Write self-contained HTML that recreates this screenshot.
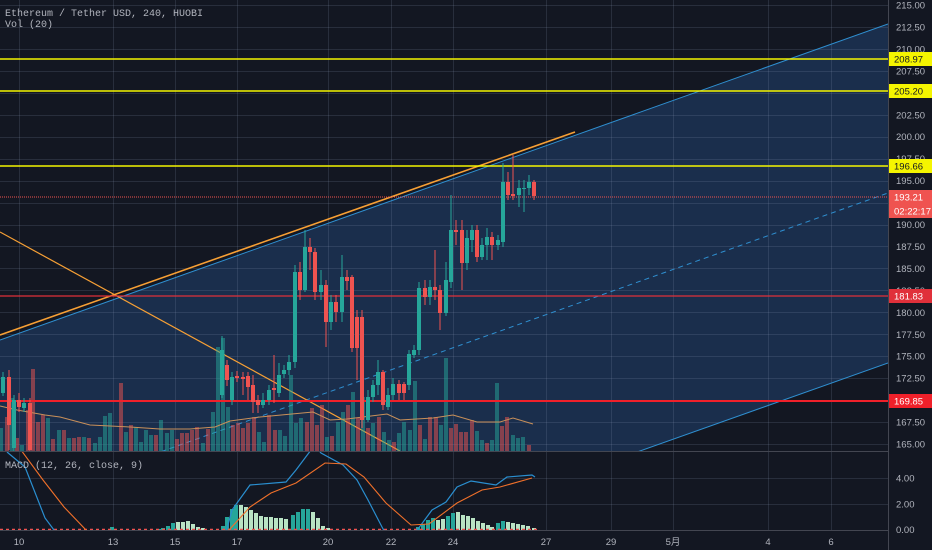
<!DOCTYPE html>
<html><head><meta charset="utf-8"><style>
html,body{margin:0;padding:0;background:#131722;overflow:hidden;width:932px;height:550px}
svg{display:block;position:absolute;left:0;top:0}
text{font-family:"Liberation Sans","Noto Sans CJK JP",sans-serif}
.mono{font-family:"Liberation Mono",monospace}
</style></head><body>
<svg id="s" width="932" height="550" viewBox="0 0 932 550" xmlns="http://www.w3.org/2000/svg">
<rect width="932" height="550" fill="#131722"/>
<defs><clipPath id="mp"><rect x="0" y="0" width="888" height="451"/></clipPath>
<clipPath id="mc"><rect x="0" y="452" width="888" height="78"/></clipPath></defs>
<g clip-path="url(#mp)">
<polygon points="0,340 888,24 888,363 0,678" fill="#1a2e4c"/>
</g>
<g id="grid"></g>
<g clip-path="url(#mp)" id="main">
<line x1="0" y1="340" x2="888" y2="24" stroke="#2f8fd0" stroke-width="1"/>
<line x1="0" y1="678" x2="888" y2="363" stroke="#2f8fd0" stroke-width="1"/>
<line x1="0" y1="509" x2="888" y2="193" stroke="#2f8fd0" stroke-width="1" stroke-dasharray="5,4"/>
<line x1="0" y1="335" x2="575" y2="132" stroke="#f7a035" stroke-width="1.6"/>
<line x1="0" y1="232" x2="400" y2="451" stroke="#f7a035" stroke-width="1.2"/>
<line x1="0" y1="59" x2="888" y2="59" stroke="#f5f500" stroke-width="1.5"/>
<line x1="0" y1="91" x2="888" y2="91" stroke="#f5f500" stroke-width="1.5"/>
<line x1="0" y1="166" x2="888" y2="166" stroke="#f5f500" stroke-width="1.5"/>
<line x1="0" y1="197" x2="888" y2="197" stroke="#ef5350" stroke-width="1" stroke-dasharray="1,1"/>
<line x1="0" y1="296" x2="888" y2="296" stroke="#e0303a" stroke-width="1.2"/>
<g id="vol"></g>
<polyline fill="none" stroke="#c9905a" stroke-width="1" points="0,406 17,410 45,415 60,417 90,425 130,427 160,429 190,429 215,427 230,421 260,417 313,412 330,420 347,419 387,414 400,420 433,418 453,415 477,422 500,422 513,418 533,424"/>
<line x1="0" y1="401" x2="888" y2="401" stroke="#f0202a" stroke-width="2"/>
<g id="cdl"></g>
</g>
<g clip-path="url(#mc)" id="macd"></g>
<line x1="0" y1="451.5" x2="888" y2="451.5" stroke="#434651"/>
<line x1="0" y1="530.5" x2="888" y2="530.5" stroke="#434651"/>
<line x1="888.5" y1="0" x2="888.5" y2="550" stroke="#434651"/>
<g id="axis" font-size="9.5" fill="#b2b5be"></g>
<text class="mono" x="5" y="16" font-size="10" fill="#b2b5be">Ethereum / Tether USD, 240, HUOBI</text>
<text class="mono" x="5" y="27" font-size="10" fill="#b2b5be">Vol (20)</text>
<text class="mono" x="5" y="468" font-size="10" fill="#b2b5be">MACD (12, 26, close, 9)</text>
</svg>
<script>
var NS="http://www.w3.org/2000/svg";
function el(p,t,a,txt){var e=document.createElementNS(NS,t);for(var k in a)e.setAttribute(k,a[k]);if(txt!=null)e.textContent=txt;document.getElementById(p).appendChild(e);return e;}
function Y(p){return 444-(p-165)*8.78;}
var gx=[19,113,175,237,328,391,453,546,611,673,768,831];
gx.forEach(function(x){el("grid","line",{x1:x+.5,y1:0,x2:x+.5,y2:530,stroke:"rgba(150,160,190,0.17)"});});
for(var p=165;p<=215;p+=2.5){var y=Math.round(Y(p))+.5;el("grid","line",{x1:0,y1:y,x2:888,y2:y,stroke:"rgba(150,160,190,0.17)"});
 el("axis","text",{x:896,y:Y(p)+3.5},p.toFixed(2));}
[478,504].forEach(function(y){el("grid","line",{x1:0,y1:y+.5,x2:888,y2:y+.5,stroke:"rgba(150,160,190,0.17)"});});
el("axis","text",{x:896,y:481.5},"4.00");el("axis","text",{x:896,y:507.5},"2.00");el("axis","text",{x:896,y:533},"0.00");
var lbl=[[19,"10"],[113,"13"],[175,"15"],[237,"17"],[328,"20"],[391,"22"],[453,"24"],[546,"27"],[611,"29"],[673,"5月"],[768,"4"],[831,"6"]];
lbl.forEach(function(l){el("axis","text",{x:l[0],y:545,"text-anchor":"middle"},l[1]);});
function box(y,bg,fg,t){el("axis","rect",{x:889,y:y-7,width:43,height:14,fill:bg});el("axis","text",{x:894,y:y+3.5,fill:fg},t);}
box(59,"#f5f500","#131722","208.97");box(91,"#f5f500","#131722","205.20");box(166,"#f5f500","#131722","196.66");
box(197,"#ef5350","#ffffff","193.21");box(211,"#ef5350","#ffffff","02:22:17");
box(296,"#e0303a","#ffffff","181.83");box(401,"#f0202a","#ffffff","169.85");
var T="rgba(38,166,154,0.5)",R="rgba(239,83,80,0.5)";
var v=[[1,428,T],[7,417,R],[12,398,T],[17,438,R],[22,445,T],[28,410,R],[33,369,R],[38,422,R],[43,415,R],[48,418,T],[53,439,R],[59,430,T],[64,430,R],[69,438,T],[74,438,R],[79,437,R],[84,437,T],[89,438,R],[95,443,T],[100,437,T],[105,416,T],[110,413,T],[121,383,R],[126,432,T],[131,425,R],[136,427,T],[141,442,T],[146,430,T],[151,435,T],[156,435,R],[161,420,T],[167,433,T],[172,430,T],[177,439,R],[182,433,R],[187,433,R],[192,430,R],[197,427,R],[203,443,T],[208,429,R],[213,412,T],[218,347,T],[223,338,T],[228,407,T],[233,425,R],[238,423,R],[243,428,R],[248,423,R],[254,417,R],[259,432,T],[264,442,T],[269,415,R],[275,430,R],[280,430,T],[285,436,T],[291,375,T],[296,423,T],[301,418,T],[307,422,R],[312,408,R],[317,425,R],[322,405,R],[327,437,T],[332,436,R],[338,422,T],[343,412,T],[348,405,R],[353,392,T],[358,418,R],[363,397,T],[368,428,R],[373,423,T],[379,417,R],[384,432,T],[389,440,T],[394,442,R],[399,433,T],[404,422,T],[410,430,T],[415,381,T],[420,425,R],[425,439,T],[430,417,R],[436,417,R],[441,425,T],[446,358,T],[451,428,R],[456,424,R],[461,432,R],[466,432,R],[472,420,R],[477,431,T],[482,440,T],[487,443,R],[492,440,T],[497,383,T],[502,426,R],[507,417,R],[513,435,T],[518,438,T],[523,437,T],[529,445,R]];
v.forEach(function(b){el("vol","rect",{x:b[0]-2,y:b[1],width:4,height:451-b[1],fill:b[2]});});
var G="#26a69a",RD="#ef5350";
var c=[[3,393,377,372,396],[9,377,425,370,450],[14,448,400,395,452],[19,400,407,393,412],[24,408,403,398,412],[30,403,450,398,452],
[222,395,350,336,398],[227,365,380,360,386],
[232,400,377,372,405],[237,376,378,371,382],[243,377,379,372,395],[248,376,387,372,400],[253,385,402,375,413],[258,400,405,395,413],[263,405,400,393,408],[269,400,390,385,405],[274,388,390,355,403],[279,393,375,363,397],[284,374,370,365,378],[289,370,362,355,375],
[295,362,272,265,368],[300,272,290,262,300],[305,290,247,230,292],[310,247,252,238,270],[315,252,292,248,300],[321,292,285,270,300],[326,285,322,280,347],[331,322,302,295,330],[336,302,312,295,322],[342,312,277,255,322],[347,277,281,270,290],[352,277,348,275,352],[357,317,348,310,380],[362,317,420,310,428],[368,420,397,390,422],[373,397,385,380,402],[378,385,372,360,395],[383,372,405,370,410],[388,407,395,388,410],[393,395,384,378,400],[399,384,393,380,400],[404,384,393,382,400],[409,385,354,350,390],[414,355,350,345,358],[419,350,288,282,355],[425,288,297,280,305],[430,297,287,280,305],[435,287,290,250,300],[440,290,313,285,330],[446,313,280,262,316],[451,282,230,195,288],[456,230,232,220,245],[462,230,263,220,290],[467,263,238,230,270],[472,240,230,225,252],[477,230,257,225,262],[482,257,245,238,260],[487,245,237,228,260],[492,237,245,232,260],[498,245,240,235,250],[503,242,182,163,247],[508,182,195,172,200],[513,194,196,155,200],[519,195,188,180,207],[524,189,188,180,212],[529,188,182,175,195],[534,182,196,180,200]];
c.forEach(function(k){var up=k[2]<k[1];var col=up?G:RD;
 el("cdl","line",{x1:k[0],y1:k[3],x2:k[0],y2:k[4],stroke:col,"stroke-width":1});
 var t=Math.min(k[1],k[2]),h=Math.max(1,Math.abs(k[1]-k[2]));
 el("cdl","rect",{x:k[0]-2,y:t,width:4,height:h,fill:col});});
var L="#b9e3c4",D="#26a69a";
var hb=[[112,527,D],[159,529,D],[163,528,D],[168,526,D],[173,523,D],[178,522,L],[183,522,L],[188,521,L],[193,524,L],[198,527,L],[203,528,L],
[223,526,D],[227,517,D],[232,509,D],[236,505,D],[241,505,L],[246,507,L],[251,510,L],[256,513,L],[261,516,L],[266,517,L],[271,517,L],[276,518,L],[281,518,L],[286,519,L],[293,515,D],[298,512,D],[303,509,D],[308,509,D],[313,512,L],[318,518,L],[323,526,L],[328,528,L],
[418,527,D],[423,524,D],[428,520,D],[433,518,D],[438,520,L],[443,519,L],[448,516,D],[453,513,D],[458,512,L],[463,515,L],[468,516,L],[473,518,L],[478,521,L],[483,523,L],[488,525,L],[492,527,L],[498,523,D],[503,521,D],[508,522,L],[513,523,L],[518,524,L],[523,525,L],[528,526,L],[534,528,L]];
hb.forEach(function(b){el("macd","rect",{x:b[0]-2,y:b[1],width:4,height:530-b[1],fill:b[2]});});
el("macd","line",{x1:0,y1:529.5,x2:540,y2:529.5,stroke:"#ef5350","stroke-width":1.5,"stroke-dasharray":"3,3"});
el("macd","polyline",{fill:"none",stroke:"#2a8fd0","stroke-width":1.2,points:"7,452 25,467 45,518 54,530 60,536 225,536 232,510 250,485 286,482 296,470 311,450 316,447 321,453 343,465 357,480 368,500 382,527 386,534 412,534 418,529 432,510 446,502 457,487 471,481 496,485 507,477 532,475 535,477"});
el("macd","polyline",{fill:"none",stroke:"#f0702a","stroke-width":1.1,points:"21,450 43,480 64,507 86,530 90,536 225,536 229,530 250,507 271,493 296,483 325,463 346,464 364,477 386,503 411,525 429,524 457,503 482,490 500,487 532,478"});
</script>
</body></html>
